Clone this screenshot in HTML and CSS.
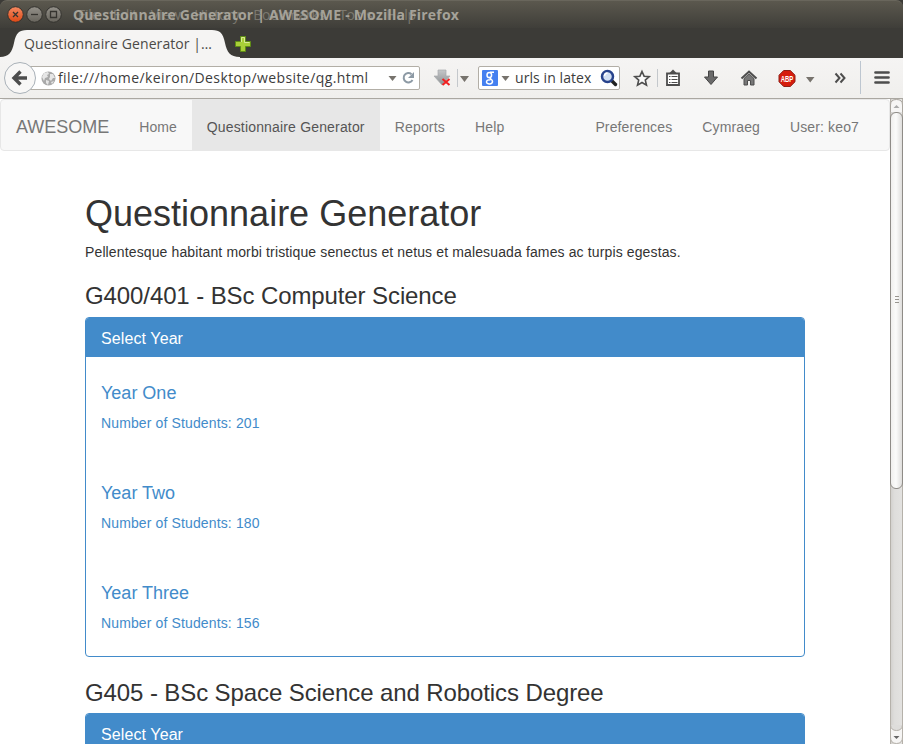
FILE: index.html
```html
<!DOCTYPE html>
<html lang="en">
<head>
<meta charset="utf-8">
<title>Questionnaire Generator | AWESOME</title>
<link rel="stylesheet" href="styles.css">
</head>
<body>
<div class="window">
  <header class="titlebar">
    <svg class="controls" width="64" height="28" viewBox="0 0 64 28">
      <defs>
        <linearGradient id="close" x1="0" y1="0" x2="0" y2="1"><stop offset="0" stop-color="#f58a62"/><stop offset="1" stop-color="#dd4814"/></linearGradient>
        <linearGradient id="knob" x1="0" y1="0" x2="0" y2="1"><stop offset="0" stop-color="#94918a"/><stop offset="1" stop-color="#67645c"/></linearGradient>
      </defs>
      <g stroke="#33322e" stroke-width="1">
        <circle cx="15.5" cy="14.5" r="7.8" fill="url(#close)"/>
        <circle cx="34.5" cy="14.5" r="7.8" fill="url(#knob)"/>
        <circle cx="53.500" cy="14.5" r="7.8" fill="url(#knob)"/>
      </g>
      <g fill="none" stroke="#35342f" stroke-width="1.300">
        <path d="M13 12l5 5M18 12l-5 5"/><path d="M31 14.500h7"/><path d="M50.500 11.500h6v6h-6z"/>
      </g>
    </svg>
    <div class="titles">
      <span class="title">Questionnaire Generator | AWESOME - Mozilla Firefox</span>
      <div class="menu"><span>File</span><span>Edit</span><span>View</span><span>History</span><span>Bookmarks</span><span>Tools</span><span>Help</span></div>
    </div>
  </header>

  <div class="tabstrip">
    <div class="tab">
      <svg class="tab-shape" width="240" height="30" viewBox="0 0 240 30"><path d="M0 30V29C9 29 12 24 14 15C16 5 19 2 27 2H212C220 2 223 5 225 15C227 24 230 29 240 29V30Z" fill="#f5f4f3"/></svg>
      <span class="tab-text">Questionnaire Generator |…</span>
    </div>
    <svg class="newtab" width="18" height="18" viewBox="0 0 18 18"><path d="M6.500 1.500h5v5h5v5h-5v5h-5v-5h-5v-5h5z" fill="#a9cf38" stroke="#5f8c16"/><path d="M7.500 7V2.500h3V7.500h5" fill="none" stroke="#d9ea94"/></svg>
  </div>

  <div class="toolbar">
    <div class="urlbar">
      <svg class="globe" width="15" height="15" viewBox="0 0 15 15"><circle cx="7.500" cy="7.500" r="7" fill="#a9a9a9"/><path d="M1 6L3 2l4-1 1 2-2 1 1 2-3 1-1 3zM9 3l3 0 2 4-2 0-2 3-2-2 1-2zM5 9l3 1-1 4-2-2zM10 11l3-1-2 3z" fill="#e6e6e6"/></svg>
      <span class="url">file:///home/keiron/Desktop/website/qg.html</span>
      <svg class="url-tools" width="30" height="16" viewBox="0 0 30 16"><path d="M1.500 6h8L5.500 11z" fill="#77736d"/><path d="M24.500 4.200A4.700 4.700 0 1 0 25.500 10" fill="none" stroke="#8d9aa5" stroke-width="2"/><path d="M27 2v6h-6z" fill="#8d9aa5"/></svg>
    </div>
    <div class="searchbar">
      <svg class="engine" width="28" height="16" viewBox="0 0 28 16"><rect width="16" height="16" rx="1" fill="#4580f0"/><g fill="none" stroke="#fff" stroke-width="1.500"><ellipse cx="7.300" cy="5" rx="2.300" ry="2.600"/><path d="M8 2.300h4M8.500 7.200c-2 1.300 2 2 2 4 0 3.500-6 3.500-6 .7 0-1.600 2-2.200 4-2.200"/></g><path d="M19.500 6h8l-4 5z" fill="#77736d"/></svg>
      <span class="query">urls in latex</span>
      <svg class="lens" width="18" height="18" viewBox="0 0 18 18"><path d="M11.500 11.500l4 4" stroke="#222" stroke-width="3.400" stroke-linecap="round"/><circle cx="7.500" cy="7.500" r="5.500" fill="#d2dff2" stroke="#28438c" stroke-width="2.500"/><path d="M4.500 7a3 3 0 0 1 3-3" fill="none" stroke="#fff" stroke-width="1.500"/></svg>
    </div>
    <svg class="icons" width="903" height="40" viewBox="0 58 903 40">
      <defs><linearGradient id="arrow" x1="0" y1="0" x2="0" y2="1"><stop offset="0" stop-color="#c5c7c9"/><stop offset="1" stop-color="#8d9193"/></linearGradient></defs>
      <circle cx="20" cy="78" r="15.500" fill="#f8f7f6" stroke="#a9b1b8"/>
      <path d="M27 78H15M20.500 71.500L14 78l6.500 6.500" fill="none" stroke="#4d4d4d" stroke-width="3.400"/>
      <path d="M438 70h8v6h4l-8 9-8-9h4z" fill="url(#arrow)" stroke="#a8aaac" stroke-width=".7"/>
      <path d="M442.500 79l7 6M449.500 79l-7 6" stroke="#f02020" stroke-width="2"/>
      <path d="M457.500 69v18M657.500 69v18" stroke="#c4c8cc"/>
      <path d="M460 76h9l-4.500 6zM806 77h8.500l-4.300 5.500z" fill="#77736d"/>
      <path d="M642 71.500l2.100 4.700 5.100.5-3.900 3.400 1.200 5.100-4.500-2.700-4.500 2.700 1.200-5.100-3.900-3.400 5.100-.5z" fill="#fafafa" stroke="#4d4d4d" stroke-width="1.600"/>
      <path d="M667 73.500h12v11.500h-12z" fill="#fff" stroke="#4d4d4d" stroke-width="1.800"/><path d="M669 73.500l4-4 4 4z" fill="#4d4d4d"/><path d="M669 76.500h1.500M671.500 76.500h6M669 79.500h1.500M671.500 79.500h6M669 82.500h1.500M671.500 82.500h6" stroke="#4d4d4d"/>
      <path d="M708.500 71h5v6h4l-6.500 7.500-6.500-7.500h4z" fill="#6a6a6a" stroke="#444"/>
      <path d="M741.500 78.500l7.500-7 7.500 7" fill="none" stroke="#4d4d4d" stroke-width="2"/><path d="M744 78.500l5-4.700 5 4.700v6.500h-3.500v-4.500h-3v4.500h-3.500z" fill="#777" stroke="#4d4d4d"/>
      <path d="M783.700 70.500h6.600l4.700 4.700v6.600l-4.700 4.700h-6.600l-4.700-4.700v-6.600z" fill="#d61c0c" stroke="#8e1f17"/>
      <text x="787" y="81.500" class="abp" textLength="12.500" lengthAdjust="spacingAndGlyphs">ABP</text>
      <path d="M835.500 73.500l4 4.500-4 4.500M840.500 73.500l4 4.500-4 4.500" fill="none" stroke="#4d4d4d" stroke-width="2"/>
      <path d="M860.500 61v33" stroke="#bdc6d0"/>
      <path d="M875.500 72.500h13M875.500 77.500h13M875.500 82.500h13" stroke="#4d4d4d" stroke-width="2.700" stroke-linecap="round"/>
    </svg>
  </div>

  <div class="viewport">
    <div class="page">
      <nav class="navbar">
        <a class="brand">AWESOME</a>
        <a class="home">Home</a><a class="active">Questionnaire Generator</a><a>Reports</a><a>Help</a>
        <div class="nav-right"><a>Preferences</a><a>Cymraeg</a><a>User: keo7</a></div>
      </nav>
      <main class="container">
        <h1>Questionnaire Generator</h1>
        <p>Pellentesque habitant morbi tristique senectus et netus et malesuada fames ac turpis egestas.</p>
        <h3>G400/401 - BSc Computer Science</h3>
        <section class="panel">
          <div class="panel-heading">Select Year</div>
          <a class="item"><h4>Year One</h4><p>Number of Students: 201</p></a>
          <a class="item"><h4>Year Two</h4><p>Number of Students: 180</p></a>
          <a class="item"><h4>Year Three</h4><p>Number of Students: 156</p></a>
        </section>
        <h3>G405 - BSc Space Science and Robotics Degree</h3>
        <section class="panel">
          <div class="panel-heading">Select Year</div>
        </section>
      </main>
    </div>
    <div class="scrollbar">
      <svg class="up" width="13" height="13" viewBox="0 0 13 13"><path d="M.5 13V6Q.5.500 6.500.500T12.500 6V13" fill="#f6f5f4" stroke="#aaa69f"/><path d="M3.500 9h6L6.500 6z" fill="#aaa"/></svg>
      <div class="thumb"><i></i><i></i><i></i></div>
      <svg class="down" width="13" height="19" viewBox="0 0 13 19"><path d="M.5 0V12Q.5 18.500 6.500 18.500T12.500 12V0" fill="#f6f5f4" stroke="#b5b1aa"/><path d="M.5 0Q1 5.500 6.500 5.500T12.500 0" fill="#dedddb" stroke="#b5b1aa"/><path d="M3.500 11h6l-3 3z" fill="#666"/></svg>
    </div>
  </div>
</div>
</body>
</html>
```
FILE: styles.css
```css
* { box-sizing: border-box; }
html, body { margin: 0; height: 100%; overflow: hidden; }
body { font-family: "Liberation Sans", Arial, sans-serif; font-size: 14px; line-height: 20px; color: #333; background: #fff; }
svg { display: block; flex: none; }
.window { width: 903px; height: 744px; display: flex; flex-direction: column; overflow: hidden; background: #3c3b37; }

.titlebar { height: 28px; flex: none; display: flex; background: linear-gradient(#5b584e, #3f3e39); border-top: 1px solid #69665c; border-radius: 7px 7px 0 0; }
.controls { margin-top: -1px; }
.titles { position: relative; flex: 1; font-family: "Open Sans", "Noto Sans", sans-serif; font-size: 14px; line-height: 28px; white-space: nowrap; }
.title { position: absolute; left: 9px; top: 0; font-weight: 700; color: #a5a299; letter-spacing: .2px; }
.menu { position: absolute; left: 14px; top: 0; display: flex; gap: 13.700px; color: #aaa69c; opacity: .5; letter-spacing: -.2px; }

.tabstrip { height: 30px; flex: none; display: flex; background: #3c3b37; }
.tab { position: relative; width: 240px; height: 30px; flex: none; }
.tab-shape { position: absolute; left: 0; top: 0; }
.tab-text { position: absolute; left: 24px; top: 4px; font: 14px/24px "Open Sans", "Noto Sans", sans-serif; letter-spacing: .08px; color: #4b4a47; white-space: nowrap; }
.newtab { margin: 7px 0 0 -6px; position: relative; }

.toolbar { position: relative; height: 41px; flex: none; display: flex; align-items: center; background: linear-gradient(#f5f4f3, #f0efed); border-bottom: 1px solid #aaa7a1; }
.urlbar, .searchbar { height: 24px; display: flex; align-items: center; background: #fff; border: 1px solid #b2aea6; border-radius: 2px; font: 14px/22px "Open Sans", "Noto Sans", sans-serif; color: #3c3c3c; white-space: nowrap; }
.urlbar { width: 400px; margin-left: 20px; padding-left: 20px; }
.globe { margin-right: 2px; }
.url { letter-spacing: .41px; }
.url-tools { margin: 0 2px 0 auto; }
.searchbar { width: 142px; margin-left: 58px; padding: 0 1px 0 3px; }
.query { margin-left: 5px; letter-spacing: .08px; }
.lens { margin-left: auto; }
.icons { position: absolute; left: 0; top: 0; }
.abp { font: bold 9.500px "Liberation Sans", sans-serif; fill: #fff; text-anchor: middle; }

.viewport { flex: 1; min-height: 0; display: flex; background: #fff; }
.page { width: 890px; height: 645px; overflow: hidden; }
.navbar { height: 52px; display: flex; align-items: stretch; border: 1px solid #e7e7e7; border-radius: 4px; background: #f8f8f8; }
.navbar a { padding: 17px 15px 13px; line-height: 20px; color: #777; white-space: nowrap; letter-spacing: .17px; }
.navbar .brand { font-size: 18px; letter-spacing: 0; }
.navbar .home { letter-spacing: 0; }
.navbar .active { color: #555; background: #e7e7e7; }
.nav-right { display: flex; margin-left: auto; padding-right: 15px; }
.navbar .nav-right a { letter-spacing: .13px; }

.container { width: 750px; margin: 0 auto; padding: 0 15px; }
h1, h3, h4 { font-weight: 400; line-height: 1.1; }
h1 { margin: 43px 0 8px; font-size: 36px; }
h3 { margin: 21px 0 8px; font-size: 24px; letter-spacing: -.1px; }
h4 { margin: 0 0 10px; font-size: 18px; }
p { margin: 0 0 10px; letter-spacing: .13px; }
.panel { border: 1px solid #428bca; border-radius: 4px; margin-bottom: 23px; overflow: hidden; }
.panel + h3 { margin-bottom: 7px; }
.panel-heading { height: 38.600px; padding: 12px 15px 9px; font-size: 16px; line-height: 18px; letter-spacing: .1px; background: #428bca; color: #fff; }
.item { display: block; height: 100px; padding: 27px 15px 0; color: #428bca; }
.item:last-child { height: 99px; }

.scrollbar { width: 13px; display: flex; flex-direction: column; background: linear-gradient(90deg, #d3d1ce, #dedddb 30%, #e3e2e0); border-left: 1px solid #b5b1aa; border-right: 1px solid #b5b1aa; }
.up, .down { margin-left: -1px; }
.thumb { width: 13px; height: 377px; margin-left: -1px; flex: none; display: flex; flex-direction: column; justify-content: center; align-items: center; gap: 2px; padding-bottom: 2px; border: 1px solid #8f8c87; border-radius: 6px; background: linear-gradient(90deg, #f0efed, #fbfbfa 45%, #dfdedc); }
.thumb i { width: 4px; height: 1px; background: #98958f; }
.down { margin-top: auto; }
```
